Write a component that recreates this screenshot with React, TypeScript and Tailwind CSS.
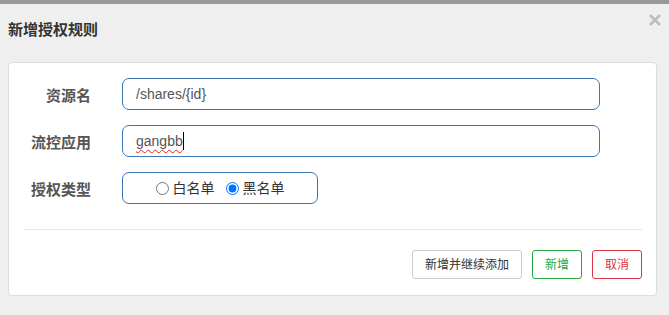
import React from "react";

const font = { fontFamily: '"Liberation Sans", Arial, "Noto Sans CJK SC", sans-serif' };

function Row({ label, children }: { label: string; children: React.ReactNode }) {
  return (
    <div className="flex items-center h-8">
      <div className="w-[67px] pt-[3px] text-right text-[15px] font-bold text-[#555] leading-none">{label}</div>
      <div className="ml-[31px]">{children}</div>
    </div>
  );
}

export default function App() {
  return (
    <div className="w-[669px] h-[315px] bg-[#efefef] flex flex-col overflow-hidden" style={font}>
      <div className="h-[4px] bg-[#999999]" />
      <div className="flex justify-between h-[58px] pl-2 pr-2">
        <h4 className="mt-[14px] text-[15px] font-bold text-[#333] leading-[24px]">新增授权规则</h4>
        <button className="mt-[10px] w-3 h-3 flex items-center justify-center" aria-label="close">
          <svg width="12" height="12" viewBox="0 0 12 12">
            <path d="M1 1 L11 11 M11 1 L1 11" stroke="#bdbdbd" strokeWidth="2.6" />
          </svg>
        </button>
      </div>
      <div className="ml-2 mr-3 bg-white border border-[#dddddd] rounded-[4px] h-[234px] pl-[15px] pr-[14px] pt-[15px]">
        <div className="flex flex-col gap-[15px]">
          <Row label="资源名">
            <div className="w-[478px] h-8 border border-[#3a77b3] rounded-[7px] pl-[13px] flex items-center text-[14px] text-[#555]">
              /shares/{"{id}"}
            </div>
          </Row>
          <Row label="流控应用">
            <div className="w-[478px] h-8 border border-[#3a77b3] rounded-[7px] pl-[13px] flex items-center text-[14px] text-[#555]">
              <span className="underline decoration-wavy decoration-[#e02020] decoration-1 underline-offset-[3px]">gangbb</span>
              <span className="w-px h-[18px] bg-black" />
            </div>
          </Row>
          <Row label="授权类型">
            <div className="w-[196px] h-8 border border-[#3a77b3] rounded-[7px] flex items-center justify-center gap-[11px] text-[14px] text-[#333]">
              <label className="flex items-center gap-[4px]">
                <input type="radio" name="t" className="m-0 w-[13px] h-[13px]" />
                <span>白名单</span>
              </label>
              <label className="flex items-center gap-[4px]">
                <input type="radio" name="t" defaultChecked className="m-0 w-[13px] h-[13px]" />
                <span>黑名单</span>
              </label>
            </div>
          </Row>
        </div>
        <div className="mt-[25px] h-px bg-[#e5e5e5]" />
        <div className="mt-[20px] flex justify-end gap-[10px]">
          <button className="h-[29px] px-3 rounded-[3px] border border-[#cccccc] text-[12px] text-[#333] bg-white">新增并继续添加</button>
          <button className="h-[29px] px-3 rounded-[3px] border border-[#28a745] text-[12px] text-[#28a745] bg-white">新增</button>
          <button className="h-[29px] px-3 rounded-[3px] border border-[#dc3545] text-[12px] text-[#dc3545] bg-white">取消</button>
        </div>
      </div>
    </div>
  );
}
